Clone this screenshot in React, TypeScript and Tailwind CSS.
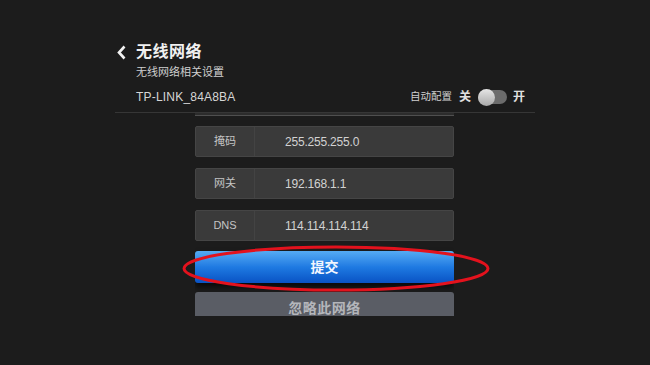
import React from 'react'

const fields = [
  ['掩码', '255.255.255.0'],
  ['网关', '192.168.1.1'],
  ['DNS', '114.114.114.114'],
]

export default function App() {
  return (
    <div className="relative w-[650px] h-[365px] overflow-hidden bg-[#1c1c1c] font-['Liberation_Sans','Noto_Sans_CJK_SC',sans-serif]">
      <div className="ml-[115px] w-[420px] pt-[42px]">
        <div className="flex items-center h-[20px]">
          <svg width="11" height="15" viewBox="0 0 11 15" className="ml-[1px]">
            <path d="M8.5 1.5 L3 7.5 L8.5 13.5" fill="none" stroke="#f2f2f2" strokeWidth="2.6" />
          </svg>
          <span className="ml-[9px] text-[16px] leading-[20px] font-bold text-[#f0f0f0] tracking-[0.5px]">
            无线网络
          </span>
        </div>
        <div className="pl-[21px] mt-[3px] text-[11px] leading-[14px] text-[#cfcfcf]">无线网络相关设置</div>
        <div className="flex items-center justify-between h-[18px] mt-[9px] pl-[21px] pr-[10px]">
          <span className="text-[12px] text-[#d6d6d6] tracking-[0.2px]">TP-LINK_84A8BA</span>
          <div className="flex items-center">
            <span className="text-[10.5px] text-[#cfcfcf]">自动配置</span>
            <span className="ml-[7px] text-[12px] font-bold text-[#e0e0e0]">关</span>
            <div className="relative ml-[7px] w-[29px] h-[17px] flex items-center">
              <div className="w-[29px] h-[14px] rounded-full bg-[#6c6c6c]" />
              <div className="absolute left-0 top-0 w-[17px] h-[17px] rounded-full bg-gradient-to-b from-[#e6e6e6] to-[#a9a9a9]" />
            </div>
            <span className="ml-[6px] text-[12px] font-bold text-[#e0e0e0]">开</span>
          </div>
        </div>
        <div className="mt-[6px] h-px bg-[#363636]" />
      </div>

      <div className="ml-[195px] w-[259px] h-[203px] overflow-hidden">
        <div className="h-[3px] bg-[#2c2c2c] border-b border-[#4f4f4f]" />
        <div className="mt-[10px] flex flex-col gap-[11px]">
          {fields.map(([label, value]) => (
            <div key={label} className="flex h-[31px] items-center bg-[#3a3a3a] border border-[#454545] rounded-[2px]">
              <div className="w-[59px] h-full flex items-center justify-center border-r border-[#434343] text-[11px] text-[#c4c4c4]">
                {label}
              </div>
              <div className="pl-[30px] text-[12px] text-[#d2d2d2] tracking-[-0.2px]">{value}</div>
            </div>
          ))}
        </div>
        <div className="mt-[10px] h-[32px] rounded-[3px] bg-gradient-to-b from-[#55abf3] via-[#1f7ae2] to-[#0a52c4] shadow-[0_4px_6px_rgba(0,0,0,0.7)] flex items-center justify-center text-[14px] font-bold text-[#f2f6ff]">
          提交
        </div>
        <div className="mt-[9px] h-[32px] rounded-[3px] bg-[#5a5d65] flex items-center justify-center text-[14px] font-bold text-[#b4b6bb] tracking-[0.5px]">
          忽略此网络
        </div>
      </div>

      <svg className="absolute left-[181px] top-[245px]" width="310" height="47" viewBox="0 0 310 47">
        <ellipse cx="155" cy="23.5" rx="152" ry="21.5" fill="none" stroke="#e3121d" strokeWidth="3" />
      </svg>
    </div>
  )
}
